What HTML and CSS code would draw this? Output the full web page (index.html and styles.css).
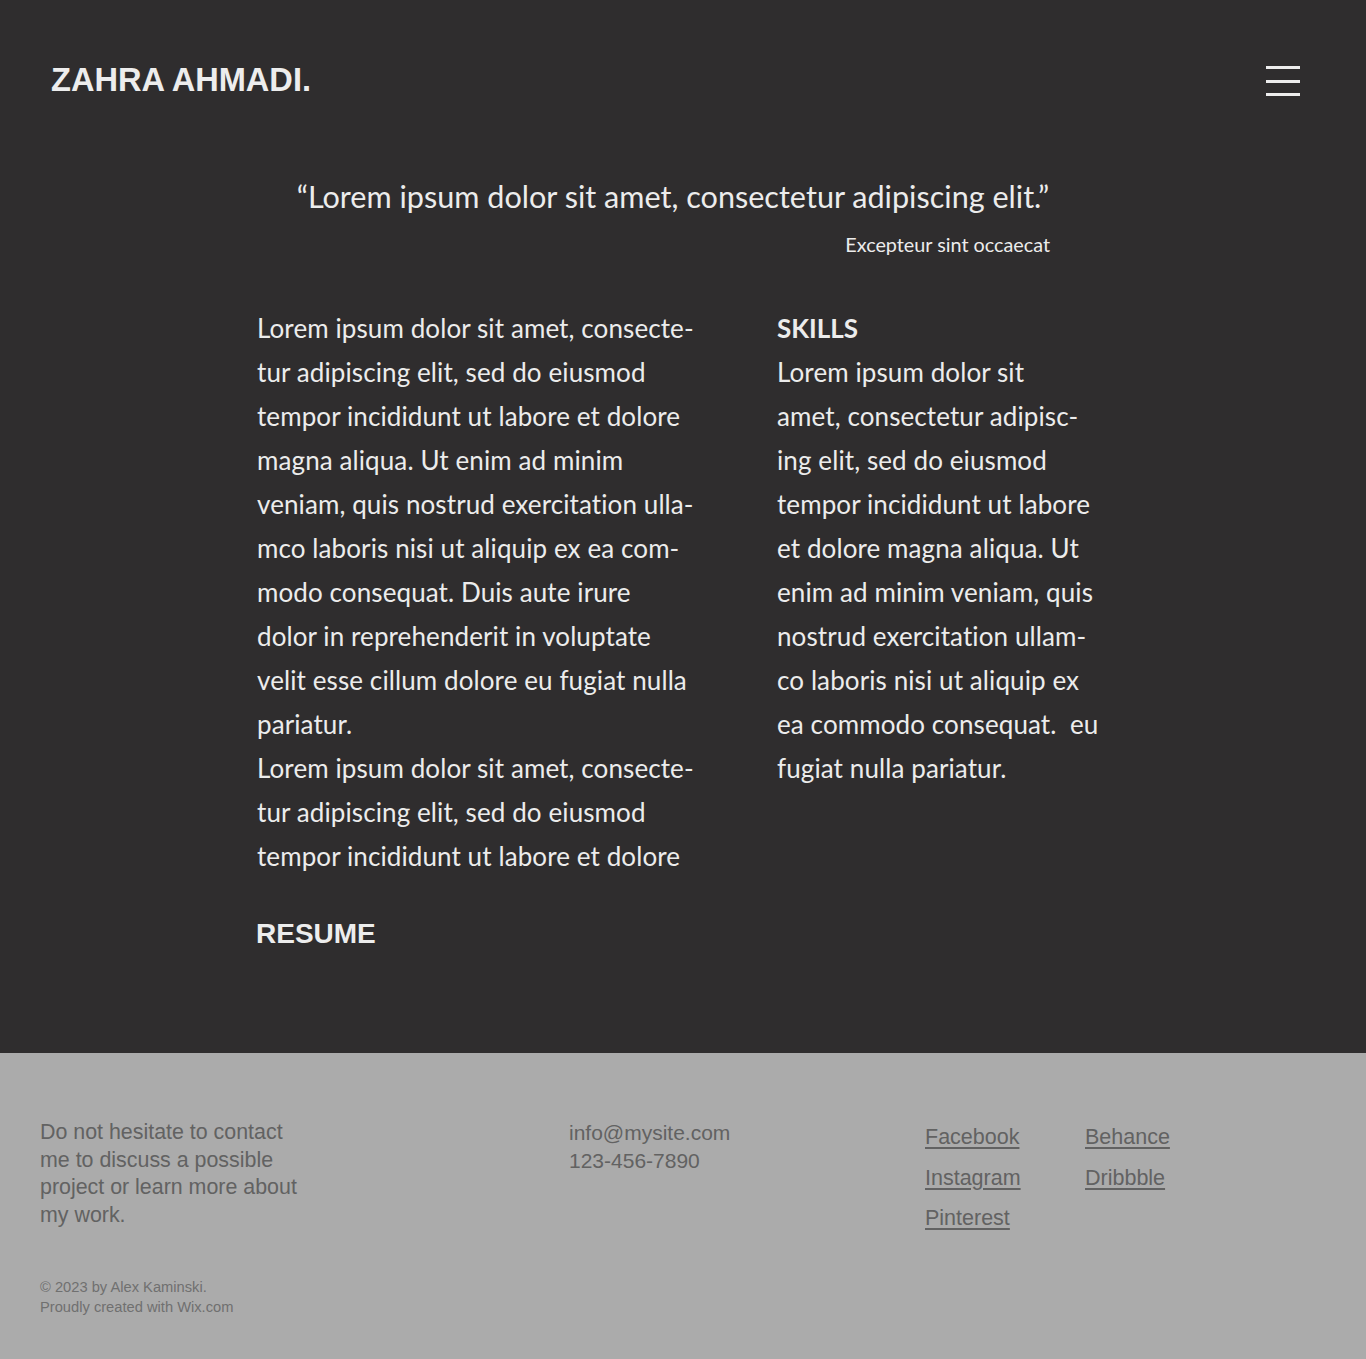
FILE: index.html
```html
<!DOCTYPE html>
<html lang="en">
<head>
<meta charset="utf-8">
<title>Zahra Ahmadi</title>
<link rel="stylesheet" href="styles.css">
</head>
<body>
<main class="page">
  <header class="site-header">
    <div class="logo">ZAHRA AHMADI.</div>
    <button class="menu" aria-label="Menu"><span></span><span></span><span></span></button>
  </header>

  <section class="quote">
    <p class="quote-text">“Lorem ipsum dolor sit amet, consectetur adipiscing elit.”</p>
    <p class="quote-by">Excepteur sint occaecat</p>
  </section>

  <section class="columns">
    <div class="col col-left">
      <p class="body">Lorem ipsum dolor sit amet, consecte-<br>tur adipiscing elit, sed do eiusmod<br>tempor incididunt ut labore et dolore<br>magna aliqua. Ut enim ad minim<br>veniam, quis nostrud exercitation ulla-<br>mco laboris nisi ut aliquip ex ea com-<br>modo consequat. Duis aute irure<br>dolor in reprehenderit in voluptate<br>velit esse cillum dolore eu fugiat nulla<br>pariatur.<br>Lorem ipsum dolor sit amet, consecte-<br>tur adipiscing elit, sed do eiusmod<br>tempor incididunt ut labore et dolore</p>
      <h2 class="resume">RESUME</h2>
    </div>
    <div class="col col-right">
      <h3 class="skills">SKILLS</h3>
      <p class="body">Lorem ipsum dolor sit<br>amet, consectetur adipisc-<br>ing elit, sed do eiusmod<br>tempor incididunt ut labore<br>et dolore magna aliqua. Ut<br>enim ad minim veniam, quis<br>nostrud exercitation ullam-<br>co laboris nisi ut aliquip ex<br>ea commodo consequat.&nbsp; eu<br>fugiat nulla pariatur.</p>
    </div>
  </section>
</main>

<footer class="site-footer">
  <div class="footer-row">
    <p class="contact-note">Do not hesitate to contact<br>me to discuss a possible<br>project or learn more about<br>my work.</p>
    <p class="contact-info">info@mysite.com<br>123-456-7890</p>
    <ul class="socials">
      <li><a href="#">Facebook</a></li>
      <li><a href="#">Behance</a></li>
      <li><a href="#">Instagram</a></li>
      <li><a href="#">Dribbble</a></li>
      <li><a href="#">Pinterest</a></li>
    </ul>
  </div>
  <p class="copyright">© 2023 by Alex Kaminski.<br>Proudly created with Wix.com</p>
</footer>
</body>
</html>
```

FILE: styles.css
```css
* { box-sizing: border-box; }
html, body { margin: 0; padding: 0; }
body {
  background: #2f2d2e;
  color: #ececec;
  font-family: Lato, "Open Sans", sans-serif;
}
p, h2, h3, ul { margin: 0; padding: 0; }

.page {
  height: 1053px;
  background: #2f2d2e;
}

.site-header {
  display: flex;
  justify-content: space-between;
  align-items: flex-start;
  padding: 60px 66px 0 51px;
}
.logo {
  font-family: "Liberation Sans", Arial, sans-serif;
  font-weight: 700;
  font-size: 32.6px;
  line-height: 40px;
  color: #ededed;
}
.menu {
  width: 34px;
  height: 30px;
  margin-top: 6px;
  padding: 0;
  border: 0;
  background: transparent;
  display: flex;
  flex-direction: column;
  justify-content: space-between;
}
.menu span {
  display: block;
  height: 3px;
  width: 34px;
  background: #ededed;
}

.quote {
  width: 754px;
  margin: 77px 0 0 296px;
}
.quote-text {
  font-size: 30.6px;
  line-height: 40px;
  font-weight: 400;
  text-align: center;
  white-space: nowrap;
}
.quote-by {
  margin-top: 15px;
  font-size: 19.8px;
  line-height: 24px;
  text-align: right;
}

.columns {
  display: grid;
  grid-template-columns: 440px 330px;
  column-gap: 80px;
  margin: 50px 0 0 257px;
}
.body {
  font-size: 26px;
  line-height: 44px;
  letter-spacing: 0.1px;
  white-space: nowrap;
}
.skills {
  font-size: 26px;
  line-height: 44px;
  font-weight: 700;
}
.resume {
  font-family: "Liberation Sans", Arial, sans-serif;
  font-weight: 700;
  font-size: 28px;
  line-height: 32px;
  margin: 40px 0 0 -1px;
  color: #ededed;
}

.site-footer {
  background: #ababab;
  height: 306px;
  padding: 64px 0 0 40px;
  font-family: "Liberation Sans", Arial, sans-serif;
  color: #626262;
}
.footer-row {
  display: flex;
  align-items: flex-start;
}
.contact-note {
  width: 529px;
  font-size: 21.4px;
  line-height: 27.5px;
  padding-top: 2px;
}
.contact-info {
  width: 356px;
  font-size: 21px;
  line-height: 28px;
  padding-top: 2px;
}
.socials {
  list-style: none;
  display: grid;
  grid-template-columns: 160px 160px;
  row-gap: 12.5px;
  padding-top: 6px;
}
.socials a {
  color: #626262;
  font-size: 21.5px;
  line-height: 28px;
  text-decoration: underline;
  text-underline-offset: 3px;
}
.copyright {
  margin-top: 45px;
  font-size: 14.7px;
  line-height: 20px;
  color: #707070;
}
```
